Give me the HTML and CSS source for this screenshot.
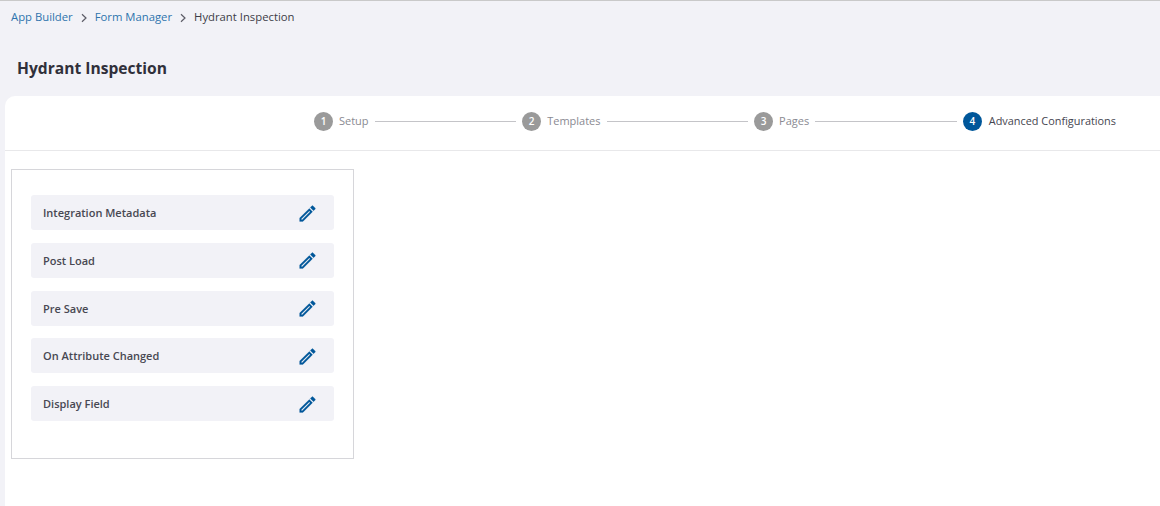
FILE: index.html
```html
<!DOCTYPE html>
<html lang="en">
<head>
<meta charset="utf-8">
<title>Hydrant Inspection</title>
<link rel="stylesheet" href="styles.css">
</head>
<body>
<nav class="crumbs">
  <a class="crumb-link">App Builder</a>
  <svg class="crumb-sep" viewBox="0 0 8 10"><path d="M2 1.2 6 5 2 8.8"/></svg>
  <a class="crumb-link">Form Manager</a>
  <svg class="crumb-sep" viewBox="0 0 8 10"><path d="M2 1.2 6 5 2 8.8"/></svg>
  <span class="crumb-current">Hydrant Inspection</span>
</nav>
<h1 class="title">Hydrant Inspection</h1>
<main class="panel">
  <div class="stepper">
    <div class="step"><span class="dot">1</span><span class="label">Setup</span></div>
    <div class="line"></div>
    <div class="step"><span class="dot">2</span><span class="label">Templates</span></div>
    <div class="line"></div>
    <div class="step"><span class="dot">3</span><span class="label">Pages</span></div>
    <div class="line"></div>
    <div class="step active"><span class="dot">4</span><span class="label">Advanced Configurations</span></div>
  </div>
  <section class="card">
    <div class="row"><span>Integration Metadata</span><svg class="pen" viewBox="0 0 24 24"><path d="M3 17.25V21h3.75L17.81 9.94l-3.75-3.75L3 17.25zM5.92 19H5v-.92l9.06-9.06.92.92L5.92 19zM20.71 5.63l-2.34-2.34a1 1 0 0 0-1.41 0l-1.83 1.83 3.75 3.75 1.83-1.83a1 1 0 0 0 0-1.41z"/></svg></div>
    <div class="row"><span>Post Load</span><svg class="pen" viewBox="0 0 24 24"><path d="M3 17.25V21h3.75L17.81 9.94l-3.75-3.75L3 17.25zM5.92 19H5v-.92l9.06-9.06.92.92L5.92 19zM20.71 5.63l-2.34-2.34a1 1 0 0 0-1.41 0l-1.83 1.83 3.75 3.75 1.83-1.83a1 1 0 0 0 0-1.41z"/></svg></div>
    <div class="row"><span>Pre Save</span><svg class="pen" viewBox="0 0 24 24"><path d="M3 17.25V21h3.75L17.81 9.94l-3.75-3.75L3 17.25zM5.92 19H5v-.92l9.06-9.06.92.92L5.92 19zM20.71 5.63l-2.34-2.34a1 1 0 0 0-1.41 0l-1.83 1.83 3.75 3.75 1.83-1.83a1 1 0 0 0 0-1.41z"/></svg></div>
    <div class="row"><span>On Attribute Changed</span><svg class="pen" viewBox="0 0 24 24"><path d="M3 17.25V21h3.75L17.81 9.94l-3.75-3.75L3 17.25zM5.92 19H5v-.92l9.06-9.06.92.92L5.92 19zM20.71 5.63l-2.34-2.34a1 1 0 0 0-1.41 0l-1.83 1.83 3.75 3.75 1.83-1.83a1 1 0 0 0 0-1.41z"/></svg></div>
    <div class="row"><span>Display Field</span><svg class="pen" viewBox="0 0 24 24"><path d="M3 17.25V21h3.75L17.81 9.94l-3.75-3.75L3 17.25zM5.92 19H5v-.92l9.06-9.06.92.92L5.92 19zM20.71 5.63l-2.34-2.34a1 1 0 0 0-1.41 0l-1.83 1.83 3.75 3.75 1.83-1.83a1 1 0 0 0 0-1.41z"/></svg></div>
  </section>
</main>
</body>
</html>
```
FILE: styles.css
```css
* { box-sizing: border-box; }
html, body { height: 100%; }
body {
  margin: 0;
  height: 506px;
  overflow: hidden;
  background: #f2f2f7;
  border-top: 1px solid #c9c9c9;
  font-family: "Open Sans", sans-serif;
  color: #33333d;
  display: flex;
  flex-direction: column;
}
.crumbs {
  display: flex;
  align-items: center;
  height: 30px;
  padding-left: 11px;
  font-size: 11.3px;
  font-weight: 500;
}
.crumb-link { color: #2e74ad; }
.crumb-current { color: #3d3d47; }
.crumb-sep {
  width: 8px;
  height: 10px;
  margin: 3px 7px 0 7px;
  fill: none;
  stroke: #5c5c66;
  stroke-width: 1.2;
}
.title {
  margin: 0;
  height: 65px;
  padding: 26px 0 0 17px;
  font-size: 15.6px;
  line-height: 22px;
  font-weight: 700;
  color: #30303a;
}
.panel {
  flex: 1;
  margin-left: 5px;
  background: #fff;
  border-top-left-radius: 10px;
}
.stepper {
  height: 55px;
  border-bottom: 1px solid #e8e8ea;
  display: flex;
  align-items: center;
  justify-content: flex-end;
  padding: 0 44px 4px 309px;
}
.step { display: flex; align-items: center; gap: 6px; flex: none; }
.dot {
  width: 19px;
  height: 19px;
  border-radius: 50%;
  background: #9a9a9a;
  color: #fff;
  font-size: 10px;
  font-weight: 600;
  display: flex;
  align-items: center;
  justify-content: center;
}
.label { font-size: 11px; padding-bottom: 1px; color: #8a8a92; }
.active { gap: 7px; }
.active .label { font-size: 10.9px; color: #45454f; }
.line { flex: 1; height: 1px; background: #c4c4c8; margin: 0 6px 0 6px; }
.active .dot { background: #00579a; }
.card {
  width: 343px;
  height: 290px;
  margin: 18px 0 0 6px;
  padding: 25.3px 19px 0;
  border: 1px solid #d6d6da;
  display: flex;
  flex-direction: column;
  gap: 12.7px;
}
.row {
  height: 35px;
  flex: none;
  background: #f2f2f7;
  border-radius: 3px;
  padding: 0 16px 0 12px;
  display: flex;
  align-items: center;
  justify-content: space-between;
  font-size: 11px;
  font-weight: 600;
  color: #484852;
}
.pen {
  width: 21px;
  height: 21px;
  margin-top: 1px;
  fill: #00579a;
  stroke: #00579a;
  stroke-width: 0.25;
}
```
